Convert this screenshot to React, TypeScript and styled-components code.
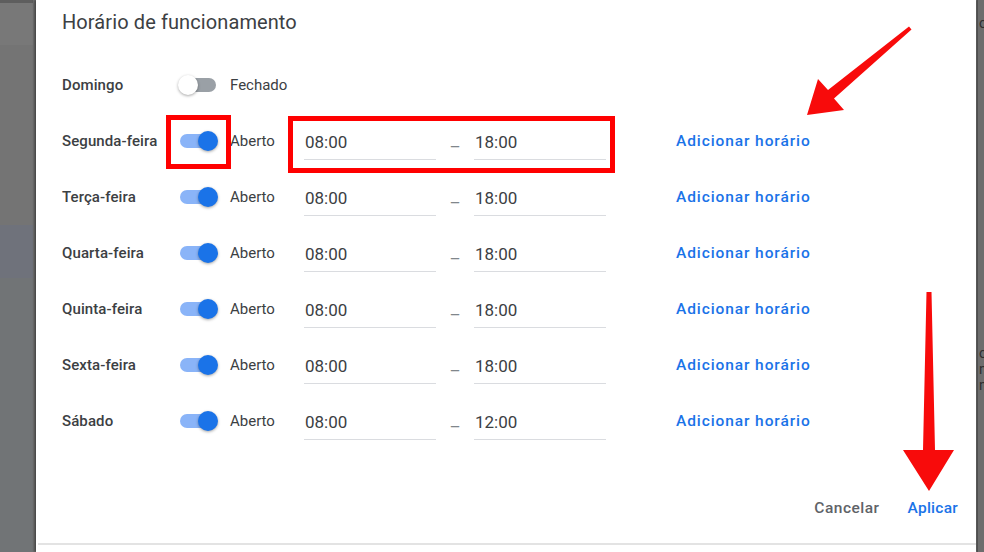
import React from "react";
import styled, { createGlobalStyle } from "styled-components";

const Global = createGlobalStyle`
  html, body { margin: 0; padding: 0; }
  body {
    width: 984px;
    height: 552px;
    overflow: hidden;
    background: #737373;
    font-family: Roboto, "Liberation Sans", Arial, sans-serif;
  }
`;

const Page = styled.div`
  position: relative;
  display: flex;
  width: 984px;
  height: 552px;
  overflow: hidden;
`;

const LeftBackdrop = styled.div`
  width: 33px;
  display: flex;
  flex-direction: column;
  flex-shrink: 0;
`;

const Band = styled.div<{ $h: number; $c: string }>`
  height: ${(p) => p.$h}px;
  background: ${(p) => p.$c};
  flex-shrink: 0;
`;

const BandFill = styled.div`
  flex: 1;
  background: #717476;
`;

const Dialog = styled.div`
  width: 940px;
  flex-shrink: 0;
  margin-left: 3px;
  background: #ffffff;
  box-shadow: -2px 0 2px rgba(0, 0, 0, 0.35), 1px 0 2px rgba(0, 0, 0, 0.35);
  display: flex;
  flex-direction: column;
  padding-left: 26px;
  box-sizing: border-box;
`;

const Title = styled.h2`
  margin: 10px 0 0 0;
  height: 25px;
  line-height: 25px;
  font-size: 20px;
  font-weight: 400;
  color: #3c4043;
  letter-spacing: 0.1px;
`;

const Rows = styled.div`
  margin-top: 22px;
  display: flex;
  flex-direction: column;
`;

const Row = styled.div`
  display: grid;
  grid-template-columns: 116px 52px 74px 132px 38px 132px 70px auto;
  align-items: center;
  height: 56px;
`;

const DayLabel = styled.span`
  font-size: 15px;
  font-weight: 500;
  color: #3c4043;
  white-space: nowrap;
  letter-spacing: 0.1px;
`;

const Switch = styled.span<{ $on: boolean }>`
  position: relative;
  display: block;
  width: 40px;
  height: 24px;
  &::before {
    content: "";
    position: absolute;
    left: 2px;
    right: 2px;
    top: 5px;
    height: 14px;
    border-radius: 7px;
    background: ${(p) => (p.$on ? "#8ab4f8" : "#9aa0a6")};
  }
  &::after {
    content: "";
    position: absolute;
    top: 2px;
    left: ${(p) => (p.$on ? "20px" : "0px")};
    width: 20px;
    height: 20px;
    border-radius: 50%;
    background: ${(p) => (p.$on ? "#1a73e8" : "#ffffff")};
    box-shadow: 0 1px 3px rgba(0, 0, 0, 0.35);
  }
`;

const Status = styled.span`
  font-size: 15px;
  color: #3c4043;
  white-space: nowrap;
`;

const TimeField = styled.div`
  height: 34px;
  margin-top: 2px;
  border-bottom: 1px solid #dadce0;
  display: flex;
  align-items: center;
  padding-left: 1px;
  font-size: 17px;
  color: #3c4043;
`;

const Dash = styled.span`
  text-align: center;
  padding-top: 11px;
  font-size: 17px;
  color: #80868b;
`;

const LinkButton = styled.span`
  font-size: 15.5px;
  font-weight: 500;
  color: #1a73e8;
  letter-spacing: 0.9px;
  white-space: nowrap;
`;

const Footer = styled.div`
  margin-top: 41px;
  height: 36px;
  display: flex;
  justify-content: flex-end;
  align-items: center;
  gap: 12px;
  padding-right: 10px;
`;

const FooterButton = styled.span<{ $primary?: boolean }>`
  padding: 0 8px;
  font-size: 15.5px;
  font-weight: 500;
  letter-spacing: ${(p) => (p.$primary ? "0.25px" : "0.5px")};
  color: ${(p) => (p.$primary ? "#1a73e8" : "#5f6368")};
`;

const Divider = styled.div`
  margin-top: 17px;
  margin-left: -24px;
  height: 2px;
  background: #e3e3e3;
`;

const RightBackdrop = styled.div`
  flex: 1;
  margin-left: 1px;
  background: #6d6d6d;
  border-left: 1px solid #4f4f4f;
  overflow: hidden;
  display: flex;
  flex-direction: column;
`;

const SideText = styled.div<{ $top: number }>`
  margin-top: ${(p) => p.$top}px;
  margin-left: 1px;
  font-size: 14px;
  line-height: 16px;
  color: #2e2e2e;
  white-space: pre;
`;

const Overlay = styled.svg`
  position: absolute;
  left: 0;
  top: 0;
  width: 984px;
  height: 552px;
  pointer-events: none;
`;

type Day = { name: string; open: boolean; from?: string; to?: string };

const days: Day[] = [
  { name: "Domingo", open: false },
  { name: "Segunda-feira", open: true, from: "08:00", to: "18:00" },
  { name: "Terça-feira", open: true, from: "08:00", to: "18:00" },
  { name: "Quarta-feira", open: true, from: "08:00", to: "18:00" },
  { name: "Quinta-feira", open: true, from: "08:00", to: "18:00" },
  { name: "Sexta-feira", open: true, from: "08:00", to: "18:00" },
  { name: "Sábado", open: true, from: "08:00", to: "12:00" },
];

export default function App() {
  return (
    <>
      <Global />
      <Page>
        <LeftBackdrop>
          <Band $h={3} $c="#5e5e5e" />
          <Band $h={42} $c="#787878" />
          <Band $h={180} $c="#747474" />
          <Band $h={53} $c="#6f727b" />
          <BandFill />
        </LeftBackdrop>
        <Dialog>
          <Title>Horário de funcionamento</Title>
          <Rows>
            {days.map((d) => (
              <Row key={d.name}>
                <DayLabel>{d.name}</DayLabel>
                <Switch $on={d.open} />
                <Status>{d.open ? "Aberto" : "Fechado"}</Status>
                {d.open ? (
                  <>
                    <TimeField>{d.from}</TimeField>
                    <Dash>–</Dash>
                    <TimeField>{d.to}</TimeField>
                    <span />
                    <LinkButton>Adicionar horário</LinkButton>
                  </>
                ) : null}
              </Row>
            ))}
          </Rows>
          <Footer>
            <FooterButton>Cancelar</FooterButton>
            <FooterButton $primary>Aplicar</FooterButton>
          </Footer>
          <Divider />
        </Dialog>
        <RightBackdrop>
          <SideText $top={15}>o</SideText>
          <SideText $top={314}>{"o\nn\nn"}</SideText>
        </RightBackdrop>
        <Overlay viewBox="0 0 984 552">
          <rect x="168.5" y="117.5" width="60" height="49" fill="none" stroke="#ff0000" strokeWidth="5" />
          <rect x="290.5" y="118.5" width="322" height="52" fill="none" stroke="#ff0000" strokeWidth="5" />
          <polygon
            points="909,26.5 828,90 818,79 807,115 844,110 834,98.5 911.5,29.5"
            fill="#f80b0b"
          />
          <polygon
            points="926.5,292 931.5,292 935,450 954,450 929,491 903,450 923,450"
            fill="#f80b0b"
          />
        </Overlay>
      </Page>
    </>
  );
}
